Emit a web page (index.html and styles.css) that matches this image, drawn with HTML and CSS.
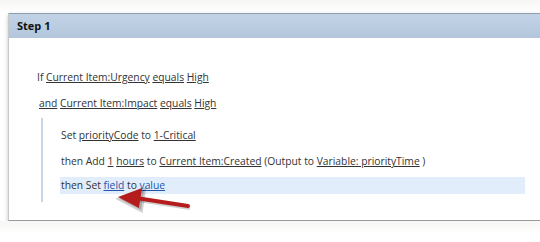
FILE: index.html
```html
<!DOCTYPE html>
<html lang="en">

<head>
  <meta charset="UTF-8">
  <title>Step 1</title>
  <link rel="stylesheet" href="styles.css">
</head>

<body>
  <div class="step-panel">
    <div class="step-header">Step 1</div>

    <div class="step-body">
      <div class="rule-line">If <a class="token">Current Item:Urgency</a> <a class="token">equals</a> <a class="token">High</a></div>
      <div class="rule-line indent-and"><a class="token">and</a> <a class="token">Current Item:Impact</a> <a class="token">equals</a> <a class="token">High</a></div>

      <div class="action-block">
        <div class="action-line">Set <a class="token">priorityCode</a> to <a class="token">1-Critical</a></div>
        <div class="action-line">then Add <a class="token">1</a> <a class="token">hours</a> to <a class="token">Current Item:Created</a> (Output to <a class="token">Variable: priorityTime</a> )</div>
        <div class="action-line selected">then Set <a class="token new">field</a> to <a class="token new">value</a></div>
      </div>
    </div>

    <svg class="arrow" width="90" height="30" viewBox="0 0 90 30">
      <line x1="80" y1="21" x2="28" y2="13" class="arrow-shadow" />
      <polygon points="10,12 34,3 31,23" class="arrow-shadow" />
      <line x1="78" y1="19" x2="26" y2="11" class="arrow-stroke" />
      <polygon points="8,10 32,1 29,21" class="arrow-head" />
    </svg>
  </div>
</body>

</html>
```

FILE: styles.css
```css
body {
  margin: 0;
  padding-top: 13px;
  font-family: 'Open Sans', 'Liberation Sans', sans-serif;
  font-size: 10.3px;
  color: #333;
  background: linear-gradient(#f6f6f4, #fff 13px);
  overflow: hidden;
}

.step-panel {
  position: relative;
  margin-left: 8px;
  margin-right: -10px;
  background-color: #fff;
  border-left: 1px solid #c8c8c8;
  border-bottom: 1px solid #9a9a9a;
  box-shadow: 0 2px 4px rgba(0, 0, 0, 0.25);
}

.step-header {
  height: 24px;
  line-height: 24px;
  padding-left: 8px;
  font-weight: 700;
  font-size: 11px;
  color: #111;
  border-top: 1px solid #8e9eaf;
  background: linear-gradient(#c2d3e6, #b3c6dc);
}

.step-body {
  padding: 26px 0 18px 0;
}

.rule-line {
  height: 26px;
  line-height: 26px;
  padding-left: 28px;
}

.indent-and {
  padding-left: 30px;
}

.token {
  color: #333;
  text-decoration: underline;
}

.token.new {
  color: #2255aa;
}

.action-block {
  margin: 2px 25px 0 32px;
  padding: 4px 0 2px 17px;
  border-left: 2px solid #c9d6e6;
}

.action-line {
  height: 26px;
  line-height: 26px;
  padding-left: 1px;
}

.action-line.selected {
  height: 17px;
  line-height: 17px;
  margin: 3px 0 6px 0;
  background-color: #e2edfc;
}

.arrow {
  position: absolute;
  left: 101px;
  top: 174px;
}

.arrow-stroke {
  stroke: #b51c1c;
  stroke-width: 4;
  stroke-linecap: round;
}

.arrow-head {
  fill: #b51c1c;
}

.arrow-shadow {
  stroke: rgba(0, 0, 0, 0.18);
  stroke-width: 4;
  fill: rgba(0, 0, 0, 0.18);
}
```
